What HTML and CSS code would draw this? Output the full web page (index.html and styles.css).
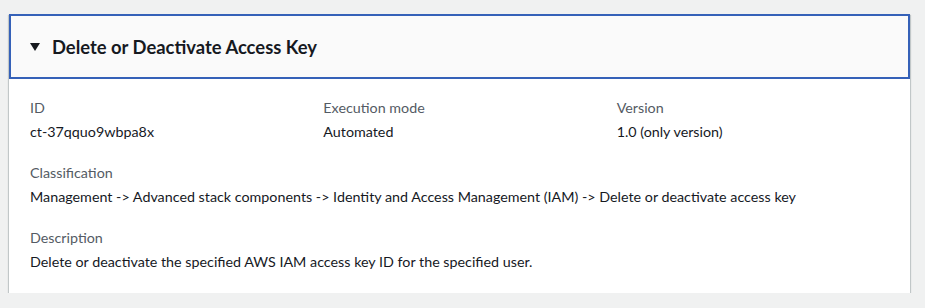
FILE: index.html
```html
<!DOCTYPE html>
<html lang="en">
<head>
<meta charset="UTF-8">
<title>Delete or Deactivate Access Key</title>
<link rel="stylesheet" href="styles.css">
</head>
<body>
<div class="panel">
  <div class="panel-header">
    <span class="caret"></span>
    <h2 class="panel-title">Delete or Deactivate Access Key</h2>
  </div>
  <div class="panel-body">
    <div class="columns">
      <div class="field">
        <div class="field-label">ID</div>
        <div class="field-value">ct-37qquo9wbpa8x</div>
      </div>
      <div class="field">
        <div class="field-label">Execution mode</div>
        <div class="field-value">Automated</div>
      </div>
      <div class="field">
        <div class="field-label">Version</div>
        <div class="field-value">1.0 (only version)</div>
      </div>
    </div>
    <div class="field">
      <div class="field-label">Classification</div>
      <div class="field-value">Management -&gt; Advanced stack components -&gt; Identity and Access Management (IAM) -&gt; Delete or deactivate access key</div>
    </div>
    <div class="field">
      <div class="field-label">Description</div>
      <div class="field-value">Delete or deactivate the specified AWS IAM access key ID for the specified user.</div>
    </div>
  </div>
</div>
</body>
</html>
```

FILE: styles.css
```css
body {
  margin: 0;
  padding: 14px 15px 0 9px;
  background: #f0f1f1;
  font-family: Lato, 'Liberation Sans', sans-serif;
  font-size: 14.3px;
  color: #16191f;
}
.panel {
  background: #fff;
  box-shadow: 0 1px 1px 0 rgba(0, 28, 36, 0.3), 1px 1px 1px 0 rgba(0, 28, 36, 0.15), -1px 1px 1px 0 rgba(0, 28, 36, 0.15);
}
.panel-header {
  display: flex;
  align-items: center;
  height: 61px;
  padding: 0 19px;
  background: #fafafa;
  border: 2px solid #3561b8;
}
.caret {
  width: 0;
  height: 0;
  border-left: 5px solid transparent;
  border-right: 5px solid transparent;
  border-top: 8px solid #16191f;
  margin-right: 12px;
}
.panel-title {
  margin: 0;
  font-size: 18.4px;
  font-weight: 700;
}
.panel-body {
  display: flex;
  flex-direction: column;
  gap: 19px;
  padding: 18px 20px 20px 21px;
}
.columns {
  display: grid;
  grid-template-columns: repeat(3, 1fr);
  gap: 20px;
}
.field-label {
  color: #545b64;
  line-height: 22px;
  margin-bottom: 2px;
}
.field-value {
  line-height: 22px;
}
```
